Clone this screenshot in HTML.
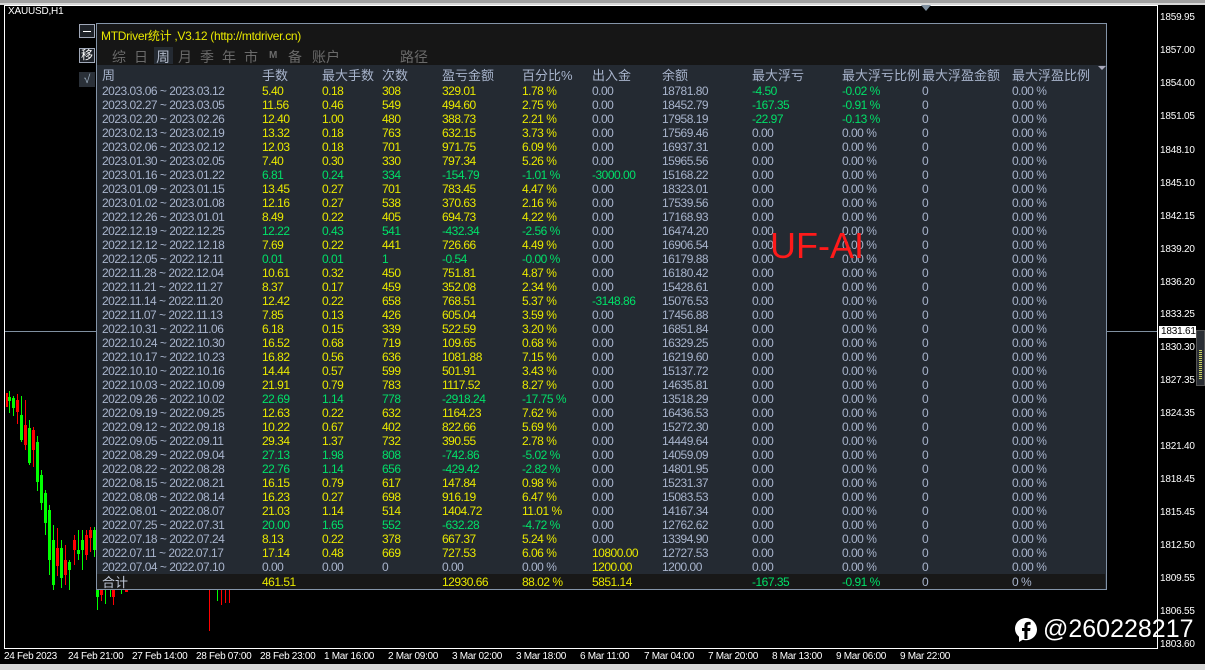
<!DOCTYPE html>
<html><head><meta charset="utf-8"><style>
*{margin:0;padding:0;box-sizing:border-box}
body{width:1205px;height:670px;background:#000;position:relative;overflow:hidden;font-family:"Liberation Sans","Noto Sans CJK SC",sans-serif;font-size:12px;color:#a8b4cc}
.a{position:absolute;white-space:nowrap}
.y{color:#e8e800}.g{color:#00e068}.w{color:#a8b4cc}
.row{position:absolute;left:0;width:1205px;height:14px;line-height:14px;letter-spacing:-0.5px}
.row span{position:absolute;top:0;white-space:nowrap}
.hd{letter-spacing:0}
.ax{position:absolute;left:1160px;color:#fff;font-size:10px;line-height:12px;letter-spacing:-0.2px}
.bx{position:absolute;top:651px;color:#fff;font-size:10px;letter-spacing:-0.3px;white-space:nowrap}
.c{position:absolute}
</style></head><body>
<div class="a" style="left:0;top:0;width:1205px;height:3px;background:#a0a0a0"></div>
<div class="a" style="left:0;top:3px;width:1205px;height:2px;background:#d8d8d8"></div>
<div class="a" style="left:4px;top:5px;width:1154px;height:644px;border:1px solid #fff;border-bottom:0"></div>
<div class="a" style="left:4px;top:648px;width:1154px;height:1px;background:#fff"></div>
<div class="a" style="left:1157px;top:5px;width:1px;height:644px;background:#fff"></div>
<div class="a" style="left:0;top:664px;width:1205px;height:6px;background:#d8d8d8"></div>
<div class="a" style="left:8px;top:6px;color:#fff;font-size:10px;letter-spacing:-0.2px">XAUUSD,H1</div>
<div class="a" style="left:5px;top:331px;width:1152px;height:1px;background:#8090a0"></div>
<div class="a" style="left:1159px;top:326px;width:37px;height:12px;background:#fff;color:#000;font-size:10px;line-height:12px;padding-left:2px;letter-spacing:-0.2px">1831.61</div>
<div class="a" style="left:1196px;top:330px;width:9px;height:56px;background:#2a2e34;border:1px solid #555"></div>
<div class="a" style="left:1199px;top:350px;width:3px;height:30px;background:repeating-linear-gradient(#c8d060 0 1px,transparent 1px 2px)"></div>
<div class="a" style="left:921px;top:5px;width:0;height:0;border-left:5px solid transparent;border-right:5px solid transparent;border-top:6px solid #8090a0"></div>

<div class="ax" style="top:12px">1859.95</div><div class="ax" style="top:45px">1857.00</div><div class="ax" style="top:78px">1854.00</div><div class="ax" style="top:111px">1851.05</div><div class="ax" style="top:145px">1848.10</div><div class="ax" style="top:178px">1845.10</div><div class="ax" style="top:211px">1842.15</div><div class="ax" style="top:244px">1839.20</div><div class="ax" style="top:277px">1836.20</div><div class="ax" style="top:309px">1833.25</div><div class="ax" style="top:342px">1830.30</div><div class="ax" style="top:375px">1827.35</div><div class="ax" style="top:408px">1824.35</div><div class="ax" style="top:441px">1821.40</div><div class="ax" style="top:474px">1818.45</div><div class="ax" style="top:507px">1815.45</div><div class="ax" style="top:540px">1812.50</div><div class="ax" style="top:573px">1809.55</div><div class="ax" style="top:606px">1806.55</div><div class="ax" style="top:639px">1803.60</div>

<div class="bx" style="left:4px">24 Feb 2023</div><div class="bx" style="left:68px">24 Feb 21:00</div><div class="bx" style="left:132px">27 Feb 14:00</div><div class="bx" style="left:196px">28 Feb 07:00</div><div class="bx" style="left:260px">28 Feb 23:00</div><div class="bx" style="left:324px">1 Mar 16:00</div><div class="bx" style="left:388px">2 Mar 09:00</div><div class="bx" style="left:452px">3 Mar 02:00</div><div class="bx" style="left:516px">3 Mar 18:00</div><div class="bx" style="left:580px">6 Mar 11:00</div><div class="bx" style="left:644px">7 Mar 04:00</div><div class="bx" style="left:708px">7 Mar 20:00</div><div class="bx" style="left:772px">8 Mar 13:00</div><div class="bx" style="left:836px">9 Mar 06:00</div><div class="bx" style="left:900px">9 Mar 22:00</div>

<!-- candles -->
<div class="c" style="left:6px;top:393px;width:2px;height:14px;background:#f00"></div>
<div class="c" style="left:9px;top:391px;width:1px;height:22px;background:#0f0"></div><div class="c" style="left:8px;top:397px;width:3px;height:4px;background:#0f0"></div>
<div class="c" style="left:13px;top:396px;width:1px;height:20px;background:#0f0"></div><div class="c" style="left:12px;top:398px;width:3px;height:10px;background:#0f0"></div>
<div class="c" style="left:17px;top:394px;width:1px;height:30px;background:#f00"></div><div class="c" style="left:16px;top:400px;width:3px;height:12px;background:#f00"></div>
<div class="c" style="left:21px;top:396px;width:1px;height:46px;background:#0f0"></div><div class="c" style="left:20px;top:415px;width:3px;height:25px;background:#0f0"></div>
<div class="c" style="left:25px;top:400px;width:1px;height:50px;background:#f00"></div><div class="c" style="left:24px;top:425px;width:3px;height:20px;background:#f00"></div>
<div class="c" style="left:29px;top:420px;width:1px;height:45px;background:#0f0"></div><div class="c" style="left:28px;top:428px;width:3px;height:35px;background:#0f0"></div>
<div class="c" style="left:33px;top:427px;width:1px;height:40px;background:#f00"></div><div class="c" style="left:32px;top:430px;width:3px;height:20px;background:#f00"></div>
<div class="c" style="left:37px;top:436px;width:1px;height:55px;background:#0f0"></div><div class="c" style="left:36px;top:442px;width:3px;height:40px;background:#0f0"></div>
<div class="c" style="left:41px;top:470px;width:1px;height:40px;background:#0f0"></div><div class="c" style="left:40px;top:475px;width:3px;height:28px;background:#0f0"></div>
<div class="c" style="left:45px;top:490px;width:1px;height:45px;background:#0f0"></div><div class="c" style="left:44px;top:493px;width:3px;height:30px;background:#0f0"></div>
<div class="c" style="left:49px;top:505px;width:1px;height:70px;background:#0f0"></div><div class="c" style="left:48px;top:510px;width:3px;height:50px;background:#0f0"></div>
<div class="c" style="left:53px;top:525px;width:1px;height:65px;background:#0f0"></div><div class="c" style="left:52px;top:540px;width:3px;height:45px;background:#0f0"></div>
<div class="c" style="left:57px;top:528px;width:1px;height:48px;background:#f00"></div><div class="c" style="left:56px;top:548px;width:3px;height:18px;background:#f00"></div>
<div class="c" style="left:61px;top:540px;width:1px;height:48px;background:#0f0"></div><div class="c" style="left:60px;top:548px;width:3px;height:30px;background:#0f0"></div>
<div class="c" style="left:65px;top:545px;width:1px;height:40px;background:#f00"></div><div class="c" style="left:64px;top:560px;width:3px;height:15px;background:#f00"></div>
<div class="c" style="left:69px;top:560px;width:1px;height:30px;background:#0f0"></div><div class="c" style="left:68px;top:562px;width:3px;height:8px;background:#0f0"></div>
<div class="c" style="left:74px;top:535px;width:1px;height:30px;background:#f00"></div><div class="c" style="left:73px;top:540px;width:3px;height:10px;background:#f00"></div>
<div class="c" style="left:78px;top:530px;width:1px;height:30px;background:#0f0"></div><div class="c" style="left:77px;top:550px;width:3px;height:4px;background:#0f0"></div>
<div class="c" style="left:82px;top:530px;width:1px;height:40px;background:#0f0"></div><div class="c" style="left:81px;top:540px;width:3px;height:10px;background:#0f0"></div>
<div class="c" style="left:86px;top:530px;width:1px;height:30px;background:#f00"></div><div class="c" style="left:85px;top:535px;width:3px;height:20px;background:#f00"></div>
<div class="c" style="left:90px;top:527px;width:1px;height:25px;background:#f00"></div><div class="c" style="left:89px;top:530px;width:3px;height:8px;background:#f00"></div>
<div class="c" style="left:94px;top:527px;width:1px;height:30px;background:#0f0"></div><div class="c" style="left:93px;top:530px;width:3px;height:20px;background:#0f0"></div>
<div class="c" style="left:97px;top:589px;width:1px;height:21px;background:#0f0"></div><div class="c" style="left:96px;top:589px;width:3px;height:8px;background:#0f0"></div>
<div class="c" style="left:101px;top:589px;width:1px;height:12px;background:#f00"></div><div class="c" style="left:100px;top:589px;width:3px;height:6px;background:#f00"></div>
<div class="c" style="left:105px;top:589px;width:1px;height:15px;background:#0f0"></div>
<div class="c" style="left:110px;top:589px;width:1px;height:8px;background:#0f0"></div>
<div class="c" style="left:113px;top:589px;width:1px;height:16px;background:#f00"></div><div class="c" style="left:112px;top:589px;width:3px;height:8px;background:#f00"></div>
<div class="c" style="left:121px;top:589px;width:1px;height:5px;background:#0f0"></div>
<div class="c" style="left:125px;top:589px;width:3px;height:3px;background:#f00"></div>
<div class="c" style="left:209px;top:589px;width:1px;height:42px;background:#f00"></div>
<div class="c" style="left:217px;top:589px;width:1px;height:12px;background:#0f0"></div>
<div class="c" style="left:221px;top:589px;width:1px;height:16px;background:#f00"></div>
<div class="c" style="left:225px;top:589px;width:1px;height:14px;background:#f00"></div>
<div class="c" style="left:229px;top:589px;width:1px;height:14px;background:#f00"></div>

<!-- side buttons -->
<div class="a" style="left:79px;top:24px;width:16px;height:14px;border:1px solid #a0a8b8;background:#1e2228"></div><div class="a" style="left:83px;top:31px;width:8px;height:1px;background:#fff"></div>
<div class="a" style="left:79px;top:48px;width:16px;height:15px;border:1px solid #a0a8b8;background:#1e2228;color:#fff;font-size:12px;line-height:13px;text-align:center">移</div>
<div class="a" style="left:79px;top:72px;width:16px;height:15px;background:#2a3038;color:#9ab;font-size:12px;line-height:15px;text-align:center">√</div>

<!-- panel -->
<div class="a" style="left:96px;top:23px;width:1011px;height:567px;border:1px solid #8494a8;background:#242a32"></div>
<div class="a" style="left:97px;top:24px;width:1009px;height:41px;background:#161616"></div>
<div class="a" style="left:101px;top:27px;color:#e8e800;font-size:12px;letter-spacing:-0.3px">MTDriver统计 ,V3.12 (http://mtdriver.cn)</div>
<div class="a" style="left:154px;top:47px;width:19px;height:17px;background:#242a32"></div>
<div class="a" style="left:112px;top:47px;color:#6a6a6a;font-size:14px">综</div>
<div class="a" style="left:134px;top:47px;color:#6a6a6a;font-size:14px">日</div>
<div class="a" style="left:156px;top:47px;color:#b0b8c8;font-size:14px">周</div>
<div class="a" style="left:178px;top:47px;color:#6a6a6a;font-size:14px">月</div>
<div class="a" style="left:200px;top:47px;color:#6a6a6a;font-size:14px">季</div>
<div class="a" style="left:222px;top:47px;color:#6a6a6a;font-size:14px">年</div>
<div class="a" style="left:244px;top:47px;color:#6a6a6a;font-size:14px">市</div>
<div class="a" style="left:269px;top:50px;color:#6a6a6a;font-size:10px;font-weight:bold">M</div>
<div class="a" style="left:288px;top:47px;color:#6a6a6a;font-size:14px">备</div>
<div class="a" style="left:312px;top:47px;color:#6a6a6a;font-size:14px">账户</div>
<div class="a" style="left:400px;top:47px;color:#6a6a6a;font-size:14px">路径</div>
<div class="a" style="left:1098px;top:66px;width:0;height:0;border-left:4px solid transparent;border-right:4px solid transparent;border-top:4px solid #aab"></div>

<div class="row w hd" style="top:69px;font-size:13px"><span style="left:102px">周</span><span style="left:262px">手数</span><span style="left:322px">最大手数</span><span style="left:382px">次数</span><span style="left:442px">盈亏金额</span><span style="left:522px">百分比%</span><span style="left:592px">出入金</span><span style="left:662px">余额</span><span style="left:752px">最大浮亏</span><span style="left:842px">最大浮亏比例</span><span style="left:922px">最大浮盈金额</span><span style="left:1012px">最大浮盈比例</span></div>

<div class="row" style="top:84px"><span style="left:102px">2023.03.06 ~ 2023.03.12</span><span class="y" style="left:262px">5.40</span><span class="y" style="left:322px">0.18</span><span class="y" style="left:382px">308</span><span class="y" style="left:442px">329.01</span><span class="y" style="left:522px">1.78 %</span><span style="left:592px">0.00</span><span style="left:662px">18781.80</span><span class="g" style="left:752px">-4.50</span><span class="g" style="left:842px">-0.02 %</span><span style="left:922px">0</span><span style="left:1012px">0.00 %</span></div>
<div class="row" style="top:98px"><span style="left:102px">2023.02.27 ~ 2023.03.05</span><span class="y" style="left:262px">11.56</span><span class="y" style="left:322px">0.46</span><span class="y" style="left:382px">549</span><span class="y" style="left:442px">494.60</span><span class="y" style="left:522px">2.75 %</span><span style="left:592px">0.00</span><span style="left:662px">18452.79</span><span class="g" style="left:752px">-167.35</span><span class="g" style="left:842px">-0.91 %</span><span style="left:922px">0</span><span style="left:1012px">0.00 %</span></div>
<div class="row" style="top:112px"><span style="left:102px">2023.02.20 ~ 2023.02.26</span><span class="y" style="left:262px">12.40</span><span class="y" style="left:322px">1.00</span><span class="y" style="left:382px">480</span><span class="y" style="left:442px">388.73</span><span class="y" style="left:522px">2.21 %</span><span style="left:592px">0.00</span><span style="left:662px">17958.19</span><span class="g" style="left:752px">-22.97</span><span class="g" style="left:842px">-0.13 %</span><span style="left:922px">0</span><span style="left:1012px">0.00 %</span></div>
<div class="row" style="top:126px"><span style="left:102px">2023.02.13 ~ 2023.02.19</span><span class="y" style="left:262px">13.32</span><span class="y" style="left:322px">0.18</span><span class="y" style="left:382px">763</span><span class="y" style="left:442px">632.15</span><span class="y" style="left:522px">3.73 %</span><span style="left:592px">0.00</span><span style="left:662px">17569.46</span><span style="left:752px">0.00</span><span style="left:842px">0.00 %</span><span style="left:922px">0</span><span style="left:1012px">0.00 %</span></div>
<div class="row" style="top:140px"><span style="left:102px">2023.02.06 ~ 2023.02.12</span><span class="y" style="left:262px">12.03</span><span class="y" style="left:322px">0.18</span><span class="y" style="left:382px">701</span><span class="y" style="left:442px">971.75</span><span class="y" style="left:522px">6.09 %</span><span style="left:592px">0.00</span><span style="left:662px">16937.31</span><span style="left:752px">0.00</span><span style="left:842px">0.00 %</span><span style="left:922px">0</span><span style="left:1012px">0.00 %</span></div>
<div class="row" style="top:154px"><span style="left:102px">2023.01.30 ~ 2023.02.05</span><span class="y" style="left:262px">7.40</span><span class="y" style="left:322px">0.30</span><span class="y" style="left:382px">330</span><span class="y" style="left:442px">797.34</span><span class="y" style="left:522px">5.26 %</span><span style="left:592px">0.00</span><span style="left:662px">15965.56</span><span style="left:752px">0.00</span><span style="left:842px">0.00 %</span><span style="left:922px">0</span><span style="left:1012px">0.00 %</span></div>
<div class="row" style="top:168px"><span style="left:102px">2023.01.16 ~ 2023.01.22</span><span class="g" style="left:262px">6.81</span><span class="g" style="left:322px">0.24</span><span class="g" style="left:382px">334</span><span class="g" style="left:442px">-154.79</span><span class="g" style="left:522px">-1.01 %</span><span class="g" style="left:592px">-3000.00</span><span style="left:662px">15168.22</span><span style="left:752px">0.00</span><span style="left:842px">0.00 %</span><span style="left:922px">0</span><span style="left:1012px">0.00 %</span></div>
<div class="row" style="top:182px"><span style="left:102px">2023.01.09 ~ 2023.01.15</span><span class="y" style="left:262px">13.45</span><span class="y" style="left:322px">0.27</span><span class="y" style="left:382px">701</span><span class="y" style="left:442px">783.45</span><span class="y" style="left:522px">4.47 %</span><span style="left:592px">0.00</span><span style="left:662px">18323.01</span><span style="left:752px">0.00</span><span style="left:842px">0.00 %</span><span style="left:922px">0</span><span style="left:1012px">0.00 %</span></div>
<div class="row" style="top:196px"><span style="left:102px">2023.01.02 ~ 2023.01.08</span><span class="y" style="left:262px">12.16</span><span class="y" style="left:322px">0.27</span><span class="y" style="left:382px">538</span><span class="y" style="left:442px">370.63</span><span class="y" style="left:522px">2.16 %</span><span style="left:592px">0.00</span><span style="left:662px">17539.56</span><span style="left:752px">0.00</span><span style="left:842px">0.00 %</span><span style="left:922px">0</span><span style="left:1012px">0.00 %</span></div>
<div class="row" style="top:210px"><span style="left:102px">2022.12.26 ~ 2023.01.01</span><span class="y" style="left:262px">8.49</span><span class="y" style="left:322px">0.22</span><span class="y" style="left:382px">405</span><span class="y" style="left:442px">694.73</span><span class="y" style="left:522px">4.22 %</span><span style="left:592px">0.00</span><span style="left:662px">17168.93</span><span style="left:752px">0.00</span><span style="left:842px">0.00 %</span><span style="left:922px">0</span><span style="left:1012px">0.00 %</span></div>
<div class="row" style="top:224px"><span style="left:102px">2022.12.19 ~ 2022.12.25</span><span class="g" style="left:262px">12.22</span><span class="g" style="left:322px">0.43</span><span class="g" style="left:382px">541</span><span class="g" style="left:442px">-432.34</span><span class="g" style="left:522px">-2.56 %</span><span style="left:592px">0.00</span><span style="left:662px">16474.20</span><span style="left:752px">0.00</span><span style="left:842px">0.00 %</span><span style="left:922px">0</span><span style="left:1012px">0.00 %</span></div>
<div class="row" style="top:238px"><span style="left:102px">2022.12.12 ~ 2022.12.18</span><span class="y" style="left:262px">7.69</span><span class="y" style="left:322px">0.22</span><span class="y" style="left:382px">441</span><span class="y" style="left:442px">726.66</span><span class="y" style="left:522px">4.49 %</span><span style="left:592px">0.00</span><span style="left:662px">16906.54</span><span style="left:752px">0.00</span><span style="left:842px">0.00 %</span><span style="left:922px">0</span><span style="left:1012px">0.00 %</span></div>
<div class="row" style="top:252px"><span style="left:102px">2022.12.05 ~ 2022.12.11</span><span class="g" style="left:262px">0.01</span><span class="g" style="left:322px">0.01</span><span class="g" style="left:382px">1</span><span class="g" style="left:442px">-0.54</span><span class="g" style="left:522px">-0.00 %</span><span style="left:592px">0.00</span><span style="left:662px">16179.88</span><span style="left:752px">0.00</span><span style="left:842px">0.00 %</span><span style="left:922px">0</span><span style="left:1012px">0.00 %</span></div>
<div class="row" style="top:266px"><span style="left:102px">2022.11.28 ~ 2022.12.04</span><span class="y" style="left:262px">10.61</span><span class="y" style="left:322px">0.32</span><span class="y" style="left:382px">450</span><span class="y" style="left:442px">751.81</span><span class="y" style="left:522px">4.87 %</span><span style="left:592px">0.00</span><span style="left:662px">16180.42</span><span style="left:752px">0.00</span><span style="left:842px">0.00 %</span><span style="left:922px">0</span><span style="left:1012px">0.00 %</span></div>
<div class="row" style="top:280px"><span style="left:102px">2022.11.21 ~ 2022.11.27</span><span class="y" style="left:262px">8.37</span><span class="y" style="left:322px">0.17</span><span class="y" style="left:382px">459</span><span class="y" style="left:442px">352.08</span><span class="y" style="left:522px">2.34 %</span><span style="left:592px">0.00</span><span style="left:662px">15428.61</span><span style="left:752px">0.00</span><span style="left:842px">0.00 %</span><span style="left:922px">0</span><span style="left:1012px">0.00 %</span></div>
<div class="row" style="top:294px"><span style="left:102px">2022.11.14 ~ 2022.11.20</span><span class="y" style="left:262px">12.42</span><span class="y" style="left:322px">0.22</span><span class="y" style="left:382px">658</span><span class="y" style="left:442px">768.51</span><span class="y" style="left:522px">5.37 %</span><span class="g" style="left:592px">-3148.86</span><span style="left:662px">15076.53</span><span style="left:752px">0.00</span><span style="left:842px">0.00 %</span><span style="left:922px">0</span><span style="left:1012px">0.00 %</span></div>
<div class="row" style="top:308px"><span style="left:102px">2022.11.07 ~ 2022.11.13</span><span class="y" style="left:262px">7.85</span><span class="y" style="left:322px">0.13</span><span class="y" style="left:382px">426</span><span class="y" style="left:442px">605.04</span><span class="y" style="left:522px">3.59 %</span><span style="left:592px">0.00</span><span style="left:662px">17456.88</span><span style="left:752px">0.00</span><span style="left:842px">0.00 %</span><span style="left:922px">0</span><span style="left:1012px">0.00 %</span></div>
<div class="row" style="top:322px"><span style="left:102px">2022.10.31 ~ 2022.11.06</span><span class="y" style="left:262px">6.18</span><span class="y" style="left:322px">0.15</span><span class="y" style="left:382px">339</span><span class="y" style="left:442px">522.59</span><span class="y" style="left:522px">3.20 %</span><span style="left:592px">0.00</span><span style="left:662px">16851.84</span><span style="left:752px">0.00</span><span style="left:842px">0.00 %</span><span style="left:922px">0</span><span style="left:1012px">0.00 %</span></div>
<div class="row" style="top:336px"><span style="left:102px">2022.10.24 ~ 2022.10.30</span><span class="y" style="left:262px">16.52</span><span class="y" style="left:322px">0.68</span><span class="y" style="left:382px">719</span><span class="y" style="left:442px">109.65</span><span class="y" style="left:522px">0.68 %</span><span style="left:592px">0.00</span><span style="left:662px">16329.25</span><span style="left:752px">0.00</span><span style="left:842px">0.00 %</span><span style="left:922px">0</span><span style="left:1012px">0.00 %</span></div>
<div class="row" style="top:350px"><span style="left:102px">2022.10.17 ~ 2022.10.23</span><span class="y" style="left:262px">16.82</span><span class="y" style="left:322px">0.56</span><span class="y" style="left:382px">636</span><span class="y" style="left:442px">1081.88</span><span class="y" style="left:522px">7.15 %</span><span style="left:592px">0.00</span><span style="left:662px">16219.60</span><span style="left:752px">0.00</span><span style="left:842px">0.00 %</span><span style="left:922px">0</span><span style="left:1012px">0.00 %</span></div>
<div class="row" style="top:364px"><span style="left:102px">2022.10.10 ~ 2022.10.16</span><span class="y" style="left:262px">14.44</span><span class="y" style="left:322px">0.57</span><span class="y" style="left:382px">599</span><span class="y" style="left:442px">501.91</span><span class="y" style="left:522px">3.43 %</span><span style="left:592px">0.00</span><span style="left:662px">15137.72</span><span style="left:752px">0.00</span><span style="left:842px">0.00 %</span><span style="left:922px">0</span><span style="left:1012px">0.00 %</span></div>
<div class="row" style="top:378px"><span style="left:102px">2022.10.03 ~ 2022.10.09</span><span class="y" style="left:262px">21.91</span><span class="y" style="left:322px">0.79</span><span class="y" style="left:382px">783</span><span class="y" style="left:442px">1117.52</span><span class="y" style="left:522px">8.27 %</span><span style="left:592px">0.00</span><span style="left:662px">14635.81</span><span style="left:752px">0.00</span><span style="left:842px">0.00 %</span><span style="left:922px">0</span><span style="left:1012px">0.00 %</span></div>
<div class="row" style="top:392px"><span style="left:102px">2022.09.26 ~ 2022.10.02</span><span class="g" style="left:262px">22.69</span><span class="g" style="left:322px">1.14</span><span class="g" style="left:382px">778</span><span class="g" style="left:442px">-2918.24</span><span class="g" style="left:522px">-17.75 %</span><span style="left:592px">0.00</span><span style="left:662px">13518.29</span><span style="left:752px">0.00</span><span style="left:842px">0.00 %</span><span style="left:922px">0</span><span style="left:1012px">0.00 %</span></div>
<div class="row" style="top:406px"><span style="left:102px">2022.09.19 ~ 2022.09.25</span><span class="y" style="left:262px">12.63</span><span class="y" style="left:322px">0.22</span><span class="y" style="left:382px">632</span><span class="y" style="left:442px">1164.23</span><span class="y" style="left:522px">7.62 %</span><span style="left:592px">0.00</span><span style="left:662px">16436.53</span><span style="left:752px">0.00</span><span style="left:842px">0.00 %</span><span style="left:922px">0</span><span style="left:1012px">0.00 %</span></div>
<div class="row" style="top:420px"><span style="left:102px">2022.09.12 ~ 2022.09.18</span><span class="y" style="left:262px">10.22</span><span class="y" style="left:322px">0.67</span><span class="y" style="left:382px">402</span><span class="y" style="left:442px">822.66</span><span class="y" style="left:522px">5.69 %</span><span style="left:592px">0.00</span><span style="left:662px">15272.30</span><span style="left:752px">0.00</span><span style="left:842px">0.00 %</span><span style="left:922px">0</span><span style="left:1012px">0.00 %</span></div>
<div class="row" style="top:434px"><span style="left:102px">2022.09.05 ~ 2022.09.11</span><span class="y" style="left:262px">29.34</span><span class="y" style="left:322px">1.37</span><span class="y" style="left:382px">732</span><span class="y" style="left:442px">390.55</span><span class="y" style="left:522px">2.78 %</span><span style="left:592px">0.00</span><span style="left:662px">14449.64</span><span style="left:752px">0.00</span><span style="left:842px">0.00 %</span><span style="left:922px">0</span><span style="left:1012px">0.00 %</span></div>
<div class="row" style="top:448px"><span style="left:102px">2022.08.29 ~ 2022.09.04</span><span class="g" style="left:262px">27.13</span><span class="g" style="left:322px">1.98</span><span class="g" style="left:382px">808</span><span class="g" style="left:442px">-742.86</span><span class="g" style="left:522px">-5.02 %</span><span style="left:592px">0.00</span><span style="left:662px">14059.09</span><span style="left:752px">0.00</span><span style="left:842px">0.00 %</span><span style="left:922px">0</span><span style="left:1012px">0.00 %</span></div>
<div class="row" style="top:462px"><span style="left:102px">2022.08.22 ~ 2022.08.28</span><span class="g" style="left:262px">22.76</span><span class="g" style="left:322px">1.14</span><span class="g" style="left:382px">656</span><span class="g" style="left:442px">-429.42</span><span class="g" style="left:522px">-2.82 %</span><span style="left:592px">0.00</span><span style="left:662px">14801.95</span><span style="left:752px">0.00</span><span style="left:842px">0.00 %</span><span style="left:922px">0</span><span style="left:1012px">0.00 %</span></div>
<div class="row" style="top:476px"><span style="left:102px">2022.08.15 ~ 2022.08.21</span><span class="y" style="left:262px">16.15</span><span class="y" style="left:322px">0.79</span><span class="y" style="left:382px">617</span><span class="y" style="left:442px">147.84</span><span class="y" style="left:522px">0.98 %</span><span style="left:592px">0.00</span><span style="left:662px">15231.37</span><span style="left:752px">0.00</span><span style="left:842px">0.00 %</span><span style="left:922px">0</span><span style="left:1012px">0.00 %</span></div>
<div class="row" style="top:490px"><span style="left:102px">2022.08.08 ~ 2022.08.14</span><span class="y" style="left:262px">16.23</span><span class="y" style="left:322px">0.27</span><span class="y" style="left:382px">698</span><span class="y" style="left:442px">916.19</span><span class="y" style="left:522px">6.47 %</span><span style="left:592px">0.00</span><span style="left:662px">15083.53</span><span style="left:752px">0.00</span><span style="left:842px">0.00 %</span><span style="left:922px">0</span><span style="left:1012px">0.00 %</span></div>
<div class="row" style="top:504px"><span style="left:102px">2022.08.01 ~ 2022.08.07</span><span class="y" style="left:262px">21.03</span><span class="y" style="left:322px">1.14</span><span class="y" style="left:382px">514</span><span class="y" style="left:442px">1404.72</span><span class="y" style="left:522px">11.01 %</span><span style="left:592px">0.00</span><span style="left:662px">14167.34</span><span style="left:752px">0.00</span><span style="left:842px">0.00 %</span><span style="left:922px">0</span><span style="left:1012px">0.00 %</span></div>
<div class="row" style="top:518px"><span style="left:102px">2022.07.25 ~ 2022.07.31</span><span class="g" style="left:262px">20.00</span><span class="g" style="left:322px">1.65</span><span class="g" style="left:382px">552</span><span class="g" style="left:442px">-632.28</span><span class="g" style="left:522px">-4.72 %</span><span style="left:592px">0.00</span><span style="left:662px">12762.62</span><span style="left:752px">0.00</span><span style="left:842px">0.00 %</span><span style="left:922px">0</span><span style="left:1012px">0.00 %</span></div>
<div class="row" style="top:532px"><span style="left:102px">2022.07.18 ~ 2022.07.24</span><span class="y" style="left:262px">8.13</span><span class="y" style="left:322px">0.22</span><span class="y" style="left:382px">378</span><span class="y" style="left:442px">667.37</span><span class="y" style="left:522px">5.24 %</span><span style="left:592px">0.00</span><span style="left:662px">13394.90</span><span style="left:752px">0.00</span><span style="left:842px">0.00 %</span><span style="left:922px">0</span><span style="left:1012px">0.00 %</span></div>
<div class="row" style="top:546px"><span style="left:102px">2022.07.11 ~ 2022.07.17</span><span class="y" style="left:262px">17.14</span><span class="y" style="left:322px">0.48</span><span class="y" style="left:382px">669</span><span class="y" style="left:442px">727.53</span><span class="y" style="left:522px">6.06 %</span><span class="y" style="left:592px">10800.00</span><span style="left:662px">12727.53</span><span style="left:752px">0.00</span><span style="left:842px">0.00 %</span><span style="left:922px">0</span><span style="left:1012px">0.00 %</span></div>
<div class="row" style="top:560px"><span style="left:102px">2022.07.04 ~ 2022.07.10</span><span style="left:262px">0.00</span><span style="left:322px">0.00</span><span style="left:382px">0</span><span style="left:442px">0.00</span><span style="left:522px">0.00 %</span><span class="y" style="left:592px">1200.00</span><span style="left:662px">1200.00</span><span style="left:752px">0.00</span><span style="left:842px">0.00 %</span><span style="left:922px">0</span><span style="left:1012px">0.00 %</span></div>

<div class="a" style="left:97px;top:574px;width:1008px;height:15px;background:#181818"></div>
<div class="row" style="top:575px;height:15px;line-height:15px"><span style="left:102px;font-size:13px;color:#c0c8d8;letter-spacing:0">合计</span><span class="y" style="left:262px">461.51</span><span class="y" style="left:442px">12930.66</span><span class="y" style="left:522px">88.02 %</span><span class="y" style="left:592px">5851.14</span><span class="g" style="left:752px">-167.35</span><span class="g" style="left:842px">-0.91 %</span><span style="left:922px">0</span><span style="left:1012px">0 %</span></div>

<div class="a" style="left:770px;top:224px;color:#ff1a1a;font-size:36px;line-height:44px">UF-AI</div>

<svg class="a" style="left:1014px;top:617px" width="24" height="26" viewBox="0 0 24 26"><path d="M12 1C5.9 1 1 5.7 1 11.6c0 3.3 1.6 6.2 4 8.1V25l3.8-2.2c1 .3 2.1.4 3.2.4 6.1 0 11-4.7 11-10.6S18.1 1 12 1z" fill="#fff"/><path d="M13.5 22v-8h2.6l.4-3h-3V9.2c0-.9.3-1.5 1.5-1.5h1.6V5c-.3 0-1.2-.1-2.3-.1-2.3 0-3.9 1.4-3.9 4V11H8v3h2.4v8z" fill="#000"/></svg>
<div class="a" style="left:1043px;top:613px;color:#fff;font-size:25px;line-height:32px">@260228217</div>
</body></html>
